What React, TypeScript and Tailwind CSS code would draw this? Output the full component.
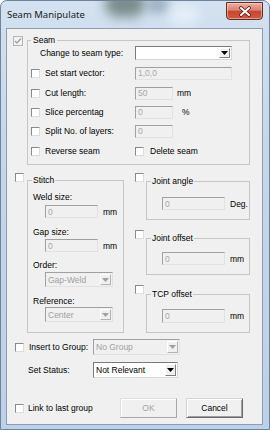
import React from "react";

function Check({ className = "" }: { className?: string }) {
  return (
    <div
      className={`h-[9px] w-[9px] shrink-0 border border-t-[#8a8a8a] border-l-[#8a8a8a] border-b-[#dcdcdc] border-r-[#dcdcdc] bg-white ${className}`}
    />
  );
}

function Edit({ value, className = "" }: { value: string; className?: string }) {
  return (
    <div
      className={`flex shrink-0 items-center border border-t-[#a0a0a0] border-l-[#a0a0a0] border-b-[#e2e2e2] border-r-[#e2e2e2] bg-[#f0f0f0] pl-[2px] text-[#a8a8a8] ${className}`}
    >
      {value}
    </div>
  );
}

function Combo({
  value = "",
  disabled = false,
  className = "",
}: {
  value?: string;
  disabled?: boolean;
  className?: string;
}) {
  return (
    <div
      className={`flex shrink-0 border ${
        disabled
          ? "border-t-[#a0a0a0] border-l-[#a0a0a0] border-b-[#e2e2e2] border-r-[#e2e2e2] bg-[#f0f0f0] text-[#a0a0a0]"
          : "border-t-[#7a7a7a] border-l-[#7a7a7a] border-b-[#d8d8d8] border-r-[#d8d8d8] bg-white text-black"
      } ${className}`}
    >
      <div className="flex flex-1 items-center overflow-hidden whitespace-nowrap pl-[2px]">{value}</div>
      <div
        className={`m-[1px] flex w-[11px] items-center justify-center border bg-[#f0f0f0] ${
          disabled
            ? "border-t-white border-l-white border-b-[#b4b4b4] border-r-[#b4b4b4]"
            : "border-t-white border-l-white border-b-[#808080] border-r-[#808080]"
        }`}
      >
        <svg width="7" height="4" viewBox="0 0 7 4">
          <path d="M0 0H7L3.5 4Z" fill={disabled ? "#a0a0a0" : "#000"} />
        </svg>
      </div>
    </div>
  );
}

export default function App() {
  return (
    <div className="relative h-[430px] w-[270px] overflow-hidden rounded-t-[7px] border border-[#6e849c] bg-[linear-gradient(180deg,#d3e1f0_0%,#c4d7eb_35%,#bcd0e7_100%)] text-[8.5px] leading-[10px] text-black [font-family:'Liberation_Sans',Arial,sans-serif]">
      <div className="pointer-events-none absolute left-[104px] top-[-10px] h-[26px] w-[40px] rounded-full bg-[#3f5448] opacity-60 blur-[6px]" />
      <div className="pointer-events-none absolute left-[146px] top-[-4px] h-[16px] w-[22px] rounded-full bg-[#6d8296] opacity-50 blur-[5px]" />
      <div className="pointer-events-none absolute left-[168px] top-[4px] h-[20px] w-[30px] rounded-full bg-[#eef5fc] opacity-70 blur-[6px]" />

      <div className="relative flex h-[27px]">
        <div className="pl-[6px] pt-[8px] text-[9.5px] leading-[12px] text-[#1b1b1b] [font-family:'Noto_Sans',Arial,sans-serif]">
          Seam Manipulate
        </div>
        <div className="ml-auto mr-[6px] mt-[1px] flex h-[18px] w-[37px] items-center justify-center rounded-b-[4px] border border-[#6e2a20] bg-[linear-gradient(180deg,#eab1a6_0%,#d9806f_45%,#c7462f_52%,#cf5a42_100%)] shadow-[inset_0_0_0_1px_rgba(255,220,210,0.5)]">
          <svg width="14" height="11" viewBox="0 0 14 11">
            <path d="M3 2L11 9M11 2L3 9" stroke="#5a1c12" strokeWidth="3.6" strokeLinecap="round" />
            <path d="M3 2L11 9M11 2L3 9" stroke="#ffffff" strokeWidth="2" strokeLinecap="round" />
          </svg>
        </div>
      </div>

      <div className="relative ml-[5px] flex h-[397px] w-[257px] flex-col border border-[#8d9eb3] bg-[#f0f0f0]">
        {/* Seam section */}
        <div className="flex items-start pl-[6px] pt-[6px]">
          <div className="mt-[1px] flex h-[10px] w-[10px] shrink-0 items-center justify-center border border-[#b4b4b4] bg-[#f3f3f3]">
            <svg width="8" height="8" viewBox="0 0 8 8">
              <path d="M1 4L3 6L7 1.5" stroke="#a2a2a2" strokeWidth="1.4" fill="none" />
            </svg>
          </div>
          <fieldset className="ml-[4px] w-[223px] border border-[#c6c6c6] pb-[6px]">
            <legend className="ml-[3px] px-[2px] leading-[10px]">Seam</legend>
            <div className="mt-[1px] flex h-[14px] items-center">
              <span className="w-[107px] whitespace-nowrap pl-[12px]">Change to seam type:</span>
              <Combo className="h-[14px] w-[97px]" />
            </div>
            <div className="mt-[6px] flex h-[14px] items-center pl-[3px]">
              <Check />
              <span className="ml-[5px] w-[90px] whitespace-nowrap">Set start vector:</span>
              <Edit value="1,0,0" className="h-[13px] w-[97px]" />
            </div>
            <div className="mt-[6px] flex h-[14px] items-center pl-[3px]">
              <Check />
              <span className="ml-[5px] w-[90px] whitespace-nowrap">Cut length:</span>
              <Edit value="50" className="h-[13px] w-[38px]" />
              <span className="ml-[4px]">mm</span>
            </div>
            <div className="mt-[5px] flex h-[14px] items-center pl-[3px]">
              <Check />
              <span className="ml-[5px] w-[90px] whitespace-nowrap">Slice percentag</span>
              <Edit value="0" className="h-[13px] w-[38px]" />
              <span className="ml-[9px]">%</span>
            </div>
            <div className="mt-[5px] flex h-[14px] items-center pl-[3px]">
              <Check />
              <span className="ml-[5px] w-[90px] whitespace-nowrap">Split No. of layers:</span>
              <Edit value="0" className="h-[13px] w-[38px]" />
            </div>
            <div className="mt-[6px] flex h-[14px] items-center pl-[3px]">
              <Check />
              <span className="ml-[5px] w-[90px] whitespace-nowrap">Reverse seam</span>
              <Check />
              <span className="ml-[6px] whitespace-nowrap">Delete seam</span>
            </div>
          </fieldset>
        </div>

        {/* Middle section */}
        <div className="mt-[8px] flex items-start pl-[8px]">
          <div className="flex items-start">
            <Check />
            <fieldset className="ml-[3px] mt-[2px] w-[97px] border border-[#c6c6c6] pb-[10px]">
              <legend className="ml-[4px] px-[1px] leading-[10px]">Stitch</legend>
              <div className="mt-[7px] h-[10px] whitespace-nowrap pl-[5px]">Weld size:</div>
              <div className="mt-[3px] flex items-center pl-[17px]">
                <Edit value="0" className="h-[13px] w-[53px]" />
                <span className="ml-[5px]">mm</span>
              </div>
              <div className="mt-[9px] h-[10px] whitespace-nowrap pl-[5px]">Gap size:</div>
              <div className="mt-[2px] flex items-center pl-[17px]">
                <Edit value="0" className="h-[13px] w-[53px]" />
                <span className="ml-[5px]">mm</span>
              </div>
              <div className="mt-[8px] h-[10px] whitespace-nowrap pl-[5px]">Order:</div>
              <div className="mt-[2px] pl-[17px]">
                <Combo value="Gap-Weld" disabled className="h-[15px] w-[68px]" />
              </div>
              <div className="mt-[9px] h-[10px] whitespace-nowrap pl-[5px]">Reference:</div>
              <div className="mt-[1px] pl-[17px]">
                <Combo value="Center" disabled className="h-[15px] w-[68px]" />
              </div>
            </fieldset>
          </div>

          <div className="ml-[11px] flex flex-col">
            <div className="flex items-start">
              <Check />
              <fieldset className="ml-[2px] mt-[3px] w-[104px] border border-[#c6c6c6] pb-[9px]">
                <legend className="ml-[4px] px-[1px] leading-[10px]">Joint angle</legend>
                <div className="mt-[11px] flex items-center pl-[15px]">
                  <Edit value="0" className="h-[13px] w-[63px]" />
                  <span className="ml-[5px]">Deg.</span>
                </div>
              </fieldset>
            </div>
            <div className="mt-[10px] flex items-start">
              <Check />
              <fieldset className="ml-[2px] mt-[3px] w-[104px] border border-[#c6c6c6] pb-[9px]">
                <legend className="ml-[4px] px-[1px] leading-[10px]">Joint offset</legend>
                <div className="mt-[9px] flex items-center pl-[15px]">
                  <Edit value="0" className="h-[13px] w-[63px]" />
                  <span className="ml-[5px]">mm</span>
                </div>
              </fieldset>
            </div>
            <div className="mt-[10px] flex items-start">
              <Check />
              <fieldset className="ml-[2px] mt-[4px] w-[104px] border border-[#c6c6c6] pb-[9px]">
                <legend className="ml-[4px] px-[1px] leading-[10px]">TCP offset</legend>
                <div className="mt-[10px] flex items-center pl-[15px]">
                  <Edit value="0" className="h-[14px] w-[63px]" />
                  <span className="ml-[5px]">mm</span>
                </div>
              </fieldset>
            </div>
          </div>
        </div>

        {/* Insert / status */}
        <div className="mt-[6px] flex h-[16px] items-center pl-[8px]">
          <Check />
          <span className="ml-[5px] w-[64px] whitespace-nowrap">Insert to Group:</span>
          <Combo value="No Group" disabled className="h-[16px] w-[87px]" />
        </div>
        <div className="mt-[7px] flex h-[16px] items-center">
          <span className="w-[86px] whitespace-nowrap pl-[21px]">Set Status:</span>
          <Combo value="Not Relevant" className="h-[16px] w-[85px]" />
        </div>

        {/* Bottom */}
        <div className="mb-[6px] mt-auto flex h-[20px] items-center pl-[8px]">
          <Check />
          <span className="ml-[4px] whitespace-nowrap">Link to last group</span>
          <div className="ml-auto flex h-[20px] w-[57px] items-center justify-center border border-t-[#dedede] border-l-[#dedede] border-b-[#a8a8a8] border-r-[#a8a8a8] text-[#a0a0a0] shadow-[inset_1px_1px_0_#ffffff]">
            OK
          </div>
          <div className="ml-[9px] mr-[19px] flex h-[20px] w-[57px] items-center justify-center border border-t-[#d4d4d4] border-l-[#d4d4d4] border-b-[#6a6a6a] border-r-[#6a6a6a] shadow-[inset_1px_1px_0_#ffffff,inset_-1px_-1px_0_#a0a0a0]">
            Cancel
          </div>
        </div>
      </div>
    </div>
  );
}
